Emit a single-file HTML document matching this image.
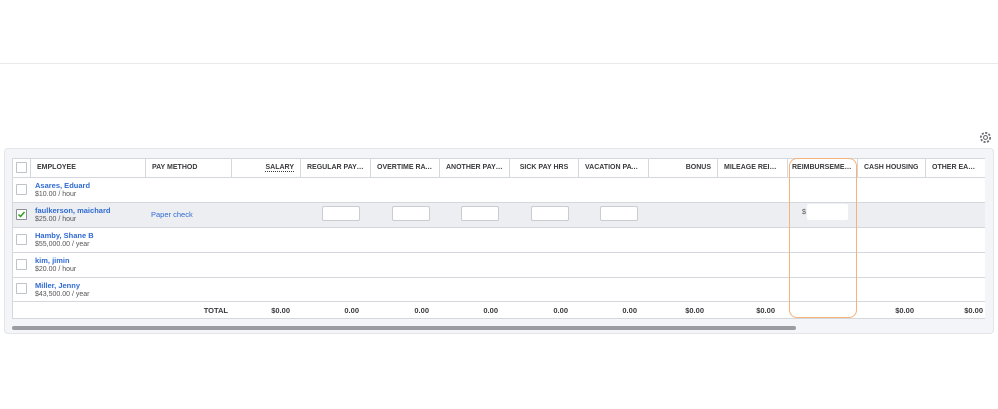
<!DOCTYPE html><html><head><style>
*{box-sizing:border-box;margin:0;padding:0}
body{width:998px;height:409px;background:#fff;font-family:"Liberation Sans",sans-serif;position:relative;overflow:hidden}
.a{position:absolute}
.hdr{font-size:7px;font-weight:bold;color:#393a3d;top:158px;height:19px;line-height:19px;border-left:1px solid #d4d7dc;padding:0 6px;white-space:nowrap;overflow:hidden;text-overflow:ellipsis}
.name{font-size:7.5px;color:#2f6ad3;font-weight:bold}
.sub{font-size:7px;color:#555}
.cb{width:11px;height:11px;border:1px solid #bfc3c8;background:#fff;border-radius:1px}
.tot{font-size:7.5px;font-weight:bold;color:#393a3d;top:306px;text-align:right}
.inp{width:38px;height:15px;border:1px solid #c9ccd1;background:#fff;border-radius:2px;top:206px}
.rl{height:1px;background:#d4d7dc;left:12px;width:973px}
</style></head><body>
<div class="a" style="top:63px;left:0;width:998px;height:1px;background:#e8e9eb"></div>
<svg class="a" style="left:979px;top:131px" width="13" height="13" viewBox="0 0 12 12"><circle cx="6" cy="6" r="4.3" fill="none" stroke="#6b6c72" stroke-width="1.6" stroke-dasharray="2 1.3"/><circle cx="6" cy="6" r="1.8" fill="none" stroke="#6b6c72" stroke-width="1"/></svg>
<div class="a" style="left:4px;top:148px;width:990px;height:186px;background:#f4f5f8;border:1px solid #e4e5e8;border-radius:4px"></div>
<div class="a" style="left:12px;top:158px;width:973px;height:161px;background:#fff;border:1px solid #d4d7dc;border-right:none"></div>
<div class="a" style="left:13px;top:202px;width:972px;height:25px;background:#eceef1"></div>
<div class="a rl" style="top:177px"></div><div class="a rl" style="top:202px"></div><div class="a rl" style="top:227px"></div><div class="a rl" style="top:252px"></div><div class="a rl" style="top:277px"></div><div class="a rl" style="top:301px"></div>
<div class="a cb" style="left:16px;top:162px"></div>
<div class="a hdr" style="left:30px;width:115px">EMPLOYEE</div>
<div class="a hdr" style="left:145px;width:86px">PAY METHOD</div>
<div class="a hdr" style="left:231px;width:69px;text-align:right"><span style="border-bottom:1px dotted #393a3d">SALARY</span></div>
<div class="a hdr" style="left:300px;width:70px">REGULAR PAY HOURS</div>
<div class="a hdr" style="left:370px;width:69px">OVERTIME RATE HOURS</div>
<div class="a hdr" style="left:439px;width:70px">ANOTHER PAY RATE</div>
<div class="a hdr" style="left:509px;width:69px;text-align:center">SICK PAY HRS</div>
<div class="a hdr" style="left:578px;width:70px">VACATION PAY HRS</div>
<div class="a hdr" style="left:648px;width:69px;text-align:right">BONUS</div>
<div class="a hdr" style="left:717px;width:70px">MILEAGE REIMBURSEMENT</div>
<div class="a hdr" style="left:787px;width:70px;padding:0 4px">REIMBURSEMENT</div>
<div class="a hdr" style="left:857px;width:68px">CASH HOUSING</div>
<div class="a hdr" style="left:925px;width:60px">OTHER EARNINGS</div>

<div class="a cb" style="left:16px;top:184px"></div>
<div class="a name" style="left:35px;top:181px">Asares, Eduard</div><div class="a sub" style="left:35px;top:191px">$10.00 / hour</div>
<div class="a cb" style="left:16px;top:209px;border-color:#8d9096"><svg width="9" height="9" style="position:absolute;left:0;top:0"><path d="M1.5 4.5 L3.5 6.5 L7.5 2" stroke="#2ca01c" stroke-width="1.5" fill="none"/></svg></div>
<div class="a name" style="left:35px;top:206px">faulkerson, maichard</div><div class="a sub" style="left:35px;top:216px">$25.00 / hour</div>
<div class="a" style="left:151px;top:210px;font-size:7.5px;color:#2f6ad3">Paper check</div>
<div class="a inp" style="left:322px"></div><div class="a inp" style="left:392px"></div><div class="a inp" style="left:461px"></div><div class="a inp" style="left:531px"></div><div class="a inp" style="left:600px"></div>
<div class="a" style="left:802px;top:209px;font-size:7px;color:#555">$</div>
<div class="a" style="left:807px;top:204px;width:41px;height:16px;background:#fff;border-radius:2px"></div>
<div class="a cb" style="left:16px;top:234px"></div>
<div class="a name" style="left:35px;top:231px">Hamby, Shane B</div><div class="a sub" style="left:35px;top:241px">$55,000.00 / year</div>
<div class="a cb" style="left:16px;top:259px"></div>
<div class="a name" style="left:35px;top:256px">kim, jimin</div><div class="a sub" style="left:35px;top:266px">$20.00 / hour</div>
<div class="a cb" style="left:16px;top:283px"></div>
<div class="a name" style="left:35px;top:281px">Miller, Jenny</div><div class="a sub" style="left:35px;top:291px">$43,500.00 / year</div>

<div class="a tot" style="left:150px;width:78px">TOTAL</div>
<div class="a tot" style="left:231px;width:59px">$0.00</div>
<div class="a tot" style="left:300px;width:59px">0.00</div>
<div class="a tot" style="left:370px;width:59px">0.00</div>
<div class="a tot" style="left:439px;width:59px">0.00</div>
<div class="a tot" style="left:509px;width:59px">0.00</div>
<div class="a tot" style="left:578px;width:59px">0.00</div>
<div class="a tot" style="left:648px;width:56px">$0.00</div>
<div class="a tot" style="left:717px;width:58px">$0.00</div>
<div class="a tot" style="left:857px;width:57px">$0.00</div>
<div class="a tot" style="left:925px;width:58px">$0.00</div>
<div class="a" style="left:789px;top:158px;width:68px;height:160px;border:1.5px solid #f5b27a;border-radius:8px"></div>
<div class="a" style="left:12px;top:326px;width:784px;height:4px;background:#9a9ca1;border-radius:2px"></div>
</body></html>
